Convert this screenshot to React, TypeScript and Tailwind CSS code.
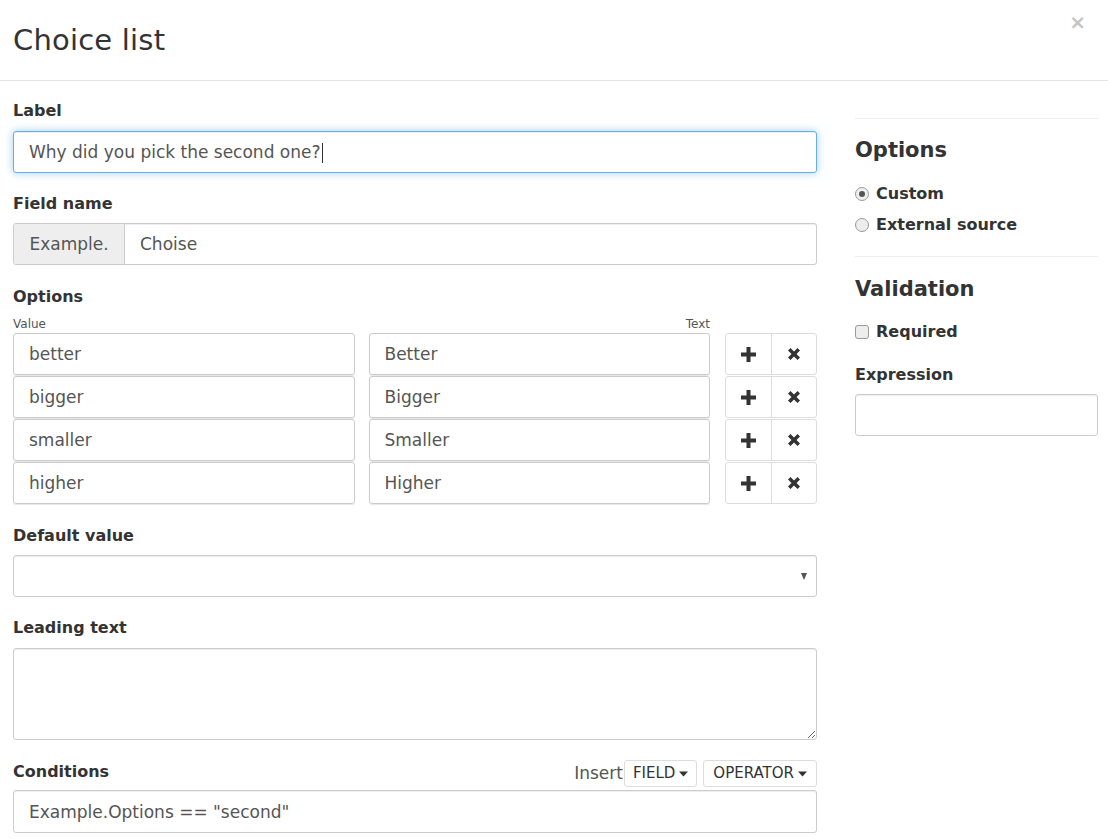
import React from "react";

const PlusIcon = () => (
  <svg width="15" height="15" viewBox="0 0 15 15">
    <path d="M5.5 0h4v5.5H15v4H9.5V15h-4V9.5H0v-4h5.5z" fill="#333" />
  </svg>
);

const TimesIcon = () => (
  <svg width="12" height="12" viewBox="0 0 12 12">
    <path d="M2.5 0 6 3.5 9.5 0 12 2.5 8.5 6 12 9.5 9.5 12 6 8.5 2.5 12 0 9.5 3.5 6 0 2.5z" fill="#333" />
  </svg>
);

const Caret = () => (
  <svg width="9" height="6" viewBox="0 0 9 6" className="ml-[4px]">
    <path d="M0 0.5h9L4.5 5.5z" fill="#333" />
  </svg>
);

const rows = [
  ["better", "Better"],
  ["bigger", "Bigger"],
  ["smaller", "Smaller"],
  ["higher", "Higher"],
];

export default function App() {
  return (
    <div className="w-[1108px] h-[839px] overflow-hidden bg-white font-['DejaVu_Sans',sans-serif] text-[#333]">
      {/* header */}
      <div className="flex h-[81px] items-center justify-between border-b border-[#e5e5e5] pl-[13px] pr-[22px]">
        <h1 className="pt-[1px] text-[29px] font-normal leading-none tracking-[0.2px] text-[#333]">Choice list</h1>
        <span className="mt-[7px] self-start text-[20px] font-bold text-[#c4c4c4]">×</span>
      </div>

      <div className="flex gap-[38px] pl-[13px] pr-[10px] pt-[20px]">
        {/* left column */}
        <div className="w-[804px] shrink-0">
          <div className="mb-[21px]">
            <div className="mb-[10px] h-[20px] text-[16px] font-bold leading-[20px]">Label</div>
            <div className="flex h-[42px] items-center rounded-[3px] border border-[#66afe9] bg-white px-[15px] pt-[2px] text-[17px] text-[#555] shadow-[inset_0_1px_1px_rgba(0,0,0,0.075),0_0_8px_rgba(102,175,233,0.6)]">
              Why did you pick the second one?<span className="ml-[1px] inline-block h-[20px] w-px bg-[#333]" />
            </div>
          </div>

          <div className="mb-[22px]">
            <div className="mb-[9px] mt-px h-[20px] text-[16px] font-bold leading-[20px]">Field name</div>
            <div className="flex h-[42px] rounded-[3px] border border-[#ccc] shadow-[inset_0_1px_1px_rgba(0,0,0,0.075)]">
              <div className="flex w-[111px] items-center justify-center rounded-l-[3px] border-r border-[#ccc] bg-[#eee] pt-[2px] text-[17px] text-[#555]">
                Example.
              </div>
              <div className="flex flex-1 items-center px-[15px] pt-[2px] text-[17px] text-[#555]">Choise</div>
            </div>
          </div>

          <div className="mb-[22px]">
            <div className="mt-px h-[20px] text-[16px] font-bold leading-[20px]">Options</div>
            <div className="mt-[10px] flex h-[14px] text-[12px] leading-[14px] text-[#555]">
              <div className="flex-1">Value</div>
              <div className="w-[14px]" />
              <div className="flex-1 text-right">Text</div>
              <div className="w-[107px]" />
            </div>
            <div className="mt-[2px] flex flex-col gap-px">
              {rows.map(([v, t]) => (
                <div key={v} className="flex gap-[14px]">
                  <div className="flex h-[42px] flex-1 items-center rounded-[3px] border border-[#ccc] px-[15px] pt-[2px] text-[17px] text-[#555] shadow-[0_1px_1px_rgba(0,0,0,0.1)]">
                    {v}
                  </div>
                  <div className="flex h-[42px] flex-1 items-center rounded-[3px] border border-[#ccc] px-[15px] pt-[2px] text-[17px] text-[#555] shadow-[0_1px_1px_rgba(0,0,0,0.1)]">
                    {t}
                  </div>
                  <div className="ml-px flex h-[42px] w-[92px] rounded-[3px] border border-[#ddd]">
                    <div className="flex flex-1 items-center justify-center border-r border-[#ddd]">
                      <PlusIcon />
                    </div>
                    <div className="flex flex-1 items-center justify-center">
                      <TimesIcon />
                    </div>
                  </div>
                </div>
              ))}
            </div>
          </div>

          <div className="mb-[21px]">
            <div className="mb-[9px] h-[20px] text-[16px] font-bold leading-[20px]">Default value</div>
            <div className="flex h-[42px] items-center justify-end rounded-[3px] border border-[#ccc] pr-[9px] shadow-[inset_0_1px_1px_rgba(0,0,0,0.075)]">
              <svg width="6" height="7" viewBox="0 0 6 7">
                <path d="M0 0h6L3 7z" fill="#555" />
              </svg>
            </div>
          </div>

          <div className="mb-[20px]">
            <div className="mb-[10px] h-[20px] text-[16px] font-bold leading-[20px]">Leading text</div>
            <textarea className="block h-[92px] w-full rounded-[3px] border border-[#ccc] shadow-[inset_0_1px_1px_rgba(0,0,0,0.075)] outline-none" />
          </div>

          <div>
            <div className="mb-[3px] flex items-end justify-between">
              <div className="mb-[5px] h-[20px] text-[16px] font-bold leading-[20px]">Conditions</div>
              <div className="flex items-center">
                <span className="text-[17px] text-[#555]">Insert</span>
                <div className="ml-px flex h-[27px] items-center rounded-[3px] border border-[#ddd] px-[8px] text-[15px] text-[#333]">
                  FIELD
                  <Caret />
                </div>
                <div className="ml-[6px] flex h-[27px] items-center rounded-[3px] border border-[#ddd] px-[9px] text-[15px] text-[#333]">
                  OPERATOR
                  <Caret />
                </div>
              </div>
            </div>
            <div className="flex h-[43px] items-center rounded-[3px] border border-[#ccc] px-[15px] pt-[2px] text-[17px] text-[#555] shadow-[inset_0_1px_1px_rgba(0,0,0,0.075)]">
              Example.Options == "second"
            </div>
          </div>
        </div>

        {/* right column */}
        <div className="w-[243px] shrink-0 pt-[17px]">
          <div className="border-t border-[#eee]" />
          <div className="mt-[18px] text-[21px] font-bold leading-[26px]">Options</div>
          <div className="mt-[19px] flex h-[24px] items-center">
            <span className="mr-[7px] flex h-[14px] w-[14px] items-center justify-center rounded-full border border-[#9a9a9a] bg-[#f0f0f0]">
              <span className="h-[6px] w-[6px] rounded-full bg-[#555]" />
            </span>
            <span className="text-[16px] font-bold">Custom</span>
          </div>
          <div className="mt-[7px] flex h-[24px] items-center">
            <span className="mr-[7px] h-[14px] w-[14px] rounded-full border border-[#9a9a9a] bg-[#ededed]" />
            <span className="text-[16px] font-bold">External source</span>
          </div>
          <div className="mt-[19px] border-t border-[#eee]" />
          <div className="mt-[19px] text-[21px] font-bold leading-[26px]">Validation</div>
          <div className="mt-[18px] flex h-[24px] items-center">
            <span className="mr-[7px] h-[14px] w-[14px] rounded-[3px] border border-[#9a9a9a] bg-[#ededed]" />
            <span className="text-[16px] font-bold">Required</span>
          </div>
          <div className="mt-[21px] h-[20px] text-[16px] font-bold leading-[20px]">Expression</div>
          <div className="mt-[9px] h-[42px] rounded-[3px] border border-[#ccc] shadow-[inset_0_1px_1px_rgba(0,0,0,0.075)]" />
        </div>
      </div>
    </div>
  );
}
